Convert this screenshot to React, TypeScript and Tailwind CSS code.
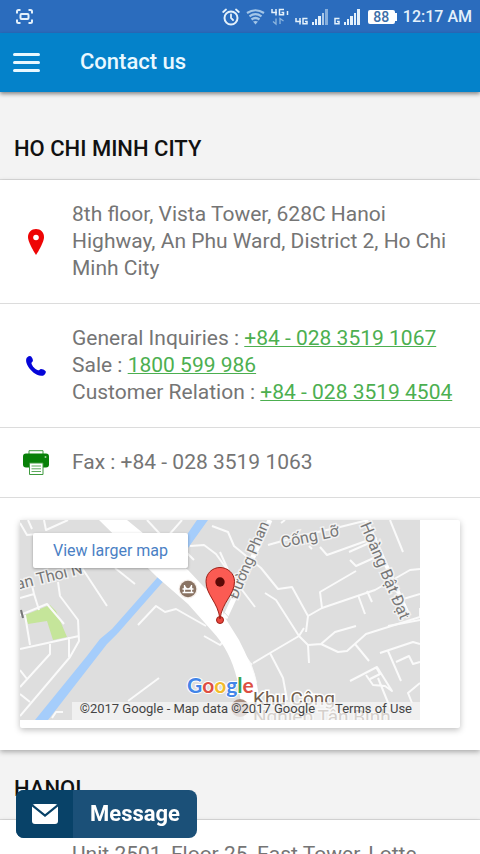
import React from "react";

interface Office {
  city: string;
  address: string;
  phones?: { label: string; number: string }[];
  fax?: string;
}

const offices: Office[] = [
  {
    city: "HO CHI MINH CITY",
    address:
      "8th floor, Vista Tower, 628C Hanoi Highway, An Phu Ward, District 2, Ho Chi Minh City",
    phones: [
      { label: "General Inquiries", number: "+84 - 028 3519 1067" },
      { label: "Sale", number: "1800 599 986" },
      { label: "Customer Relation", number: "+84 - 028 3519 4504" },
    ],
    fax: "+84 - 028 3519 1063",
  },
  {
    city: "HANOI",
    address: "Unit 2501, Floor 25, East Tower, Lotte Center Hanoi",
  },
];

function SignalBars({ dim }: { dim?: boolean }) {
  return (
    <svg width="16" height="16" viewBox="0 0 16 16" fill="#e4f1fb" aria-hidden="true">
      <rect x="0" y="13" width="2" height="3" />
      <rect x="3" y="10" width="2" height="6" />
      <rect x="6" y="7" width="3" height="9" />
      <rect x="10" y="4" width="2" height="12" opacity={dim ? 0.7 : 1} />
      <rect x="13" y="0" width="3" height="16" opacity={dim ? 0.5 : 1} />
    </svg>
  );
}

function StatusBar() {
  return (
    <div className="flex h-[33px] shrink-0 items-center bg-[#2b6cbd] pr-2 pl-4 text-[#e4f1fb]">
      <svg width="17" height="15" viewBox="0 0 17 15" fill="none" stroke="currentColor" strokeWidth="2" aria-hidden="true">
        <path d="M1 4.5V2.5Q1 1 2.5 1H4.5M12.500 1H14.500Q16 1 16 2.500V4.500M16 10.500V12.500Q16 14 14.500 14H12.500M4.500 14H2.500Q1 14 1 12.500V10.500" />
        <rect x="4.500" y="5" width="8" height="5" rx="1" />
      </svg>
      <div className="ml-auto flex items-center">
        <svg width="18" height="18" viewBox="0 0 18 18" fill="none" stroke="currentColor" strokeWidth="2" strokeLinecap="round" aria-hidden="true">
          <circle cx="9" cy="10" r="6.500" />
          <path d="M9 6.500V10L11 12M1.200 4L4 1.500M16.800 4L14 1.500" strokeWidth="1.800" />
        </svg>
        <svg className="ml-1.5" width="19" height="16" viewBox="0 0 19 16" fill="none" stroke="#a3c6e8" strokeWidth="2.200" aria-hidden="true">
          <path d="M1 4Q9.500 -1.500 18 4" />
          <path d="M3.500 7.300Q9.500 3 15.500 7.300" />
          <path d="M5.500 10.500Q9.500 7.500 13.500 10.500" />
          <path d="M7 12.500Q9.500 11.300 12 12.500L9.500 15.500Z" fill="#a3c6e8" stroke="none" />
        </svg>
        <svg className="ml-1.5" width="18" height="18" viewBox="0 0 18 18" fill="none" stroke="currentColor" strokeWidth="1.500" aria-hidden="true">
          <path d="M1 1V4.500H6M5 1V7.500M13 1.500H8.500V6.800H12.500V4.500H10.500M16.500 3V7" />
          <path d="M5 10.500V16L2 13.500M9 16V10.500L12.500 13" stroke="#8db6df" strokeWidth="1.300" />
        </svg>
        <svg className="mt-2 ml-1.5" width="13" height="8" viewBox="0 0 13 8" fill="none" stroke="currentColor" strokeWidth="1.500" aria-hidden="true">
          <path d="M1 1V4.500H6M5 1V7.500M12.500 1.500H8V6.800H12V4.500H10" />
        </svg>
        <div className="ml-1">
          <SignalBars dim />
        </div>
        <svg className="mt-2 ml-1.5" width="6" height="8" viewBox="0 0 6 8" fill="none" stroke="currentColor" strokeWidth="1.500" aria-hidden="true">
          <path d="M5.500 1.500H1V6.800H5V4.500H3" />
        </svg>
        <div className="ml-1">
          <SignalBars />
        </div>
        <div className="ml-2 flex items-center">
          <span className="flex h-3.5 w-[27px] items-center justify-center rounded-xs bg-white text-sm font-medium text-[#3d6fa8]">
            88
          </span>
          <span className="h-2 w-0.5 bg-white" />
        </div>
        <span className="ml-1.5 text-base font-medium">12:17 AM</span>
      </div>
    </div>
  );
}

function PinIcon() {
  return (
    <svg width="16" height="26" viewBox="0 0 16 26" aria-hidden="true">
      <path
        d="M8 0C3.400 0 0 3.500 0 8C0 14 8 26 8 26S16 14 16 8C16 3.500 12.600 0 8 0Z"
        fill="#ee0505"
      />
      <circle cx="8" cy="8.500" r="2.800" fill="#fff" />
    </svg>
  );
}

function PhoneIcon() {
  return (
    <svg width="20" height="20" viewBox="0 0 20 20" aria-hidden="true">
      <path
        d="M1.300 1.200C2.700 0 4.600 -.3 5.400 .8C6.300 2 7 3.600 6.900 4.800C6.800 6 5.200 6.200 5.500 7.500C6.200 10.300 9.300 13.400 12 14.300C13.300 14.700 13.700 13.100 15 13C16.500 13 18.400 13.800 19.500 14.900C20.300 15.900 19.500 17.800 18.200 18.900C16.800 20.200 13.800 20.100 11 18.800C6.500 16.600 2 11.800 .5 7C-.2 4.600 0 2.300 1.300 1.200Z"
        fill="#0505d8"
      />
    </svg>
  );
}

function PrinterIcon() {
  return (
    <svg width="26" height="25" viewBox="0 0 26 25" aria-hidden="true">
      <path d="M6 4V.7H20V4" fill="none" stroke="#3f9a3f" />
      <rect y="3.500" width="26" height="14" rx="3" fill="#078007" />
      <circle cx="22.500" cy="7" r="1" fill="#9fd49f" />
      <path d="M6.500 13H20V24.500H6.500Z" fill="#fff" stroke="#3f9a3f" />
      <path d="M8.500 16H18M8.500 18.800H18M8.500 21.500H18" stroke="#5dab5d" />
    </svg>
  );
}

function Row({ icon, children }: { icon: React.ReactNode; children: React.ReactNode }) {
  return (
    <div className="flex items-center border-b border-[#dcdcdc] py-[21px] pr-4">
      <div className="flex w-[72px] shrink-0 justify-center">{icon}</div>
      <div className="min-w-0 flex-1 text-[21px] leading-[27px] text-[#757575]">{children}</div>
    </div>
  );
}

function MapDrawing() {
  return (
    <svg className="block" width="400" height="200" viewBox="0 0 400 200" role="img" aria-label="Map">
      <rect width="400" height="200" fill="#dedede" />
      <path d="M5 95L30 85L36 91L47 117L33 120L27 101L8 104Z" fill="#c5e59a" />
      <path
        d="M177 0H188L148 56L98 113L87 124L28 200H15L67 136L80 119L92 109L137 58Z"
        fill="#a5cdfb"
      />
      {/* local streets */}
      <g fill="none" stroke="#fafafa" strokeWidth="2" strokeLinejoin="round">
        <path d="M0 3L7 15L18 14M8 0L12 9M24 0L26 10L48 0" />
        <path d="M0 78L14 74L12 65M14 74L19 90M0 95L27 84L44 104M5 95L10 125" />
        <path d="M38 62L40 76L58 100L59 121L50 137L0 196M0 129L59 116M49 117V137" />
        <path d="M30 124V134L0 167M0 150L7 159M0 174L10 182" />
        <path d="M32 198L36 192H43" />
        <path d="M62 48L87 86M95 48L115 64M118 105L136 86L145 92L156 89L186 106" />
        <path d="M108 181L139 158" />
        <path d="M127 0L140 14M162 0L148 16M164 30L174 40" />
        <path d="M170 26L184 25L196 34L216 62L235 87" />
        <path d="M192 6L208 12L214 26L241 48L258 69L272 67L288 96L286 112" />
        <path d="M200 32L218 72M288 96L302 88L355 70L390 50L400 49" />
        <path d="M302 88L300 72L336 51M338 75L345 94M347 71L352 82" />
        <path d="M245 73L256 80L279 116L288 125L289 143" />
        <path d="M230 145L250 133L279 116L284 108M250 133L263 158L267 180" />
        <path d="M288 125L301 124L318 132L327 131L346 114L400 97L400 88M301 124L315 112L336 106" />
        <path d="M335 124L349 141M368 106L400 100M380 80L400 74" />
        <path d="M330 161L357 147L372 171L365 166L353 165L346 155M356 147L360 154L350 159M358 158L371 190" />
        <path d="M360 133L393 122L400 124M368 131L381 161M376 142L389 136L393 144L400 142M400 163L388 173L392 183" />
        <path d="M248 25L280 16L320 7L348 0M261 3L265 0M289 26L292 29M300 27L307 35L346 21L357 18" />
        <path d="M329 32L356 20M330 40L336 46L356 37M370 0L383 32" />
        <path d="M184 116L200 125L207 118" />
        <path d="M208 111L230 143L237 163" />
      </g>
      {/* street carrying the Duong Phan label */}
      <path d="M250 0L205 98" stroke="#fff" strokeWidth="5" />
      <path
        d="M79 0H107L168 50L183 66Q202 84 204 96L219 120Q232 145 237 165L243 200H224L217 159Q210 130 192 111L168 84L137 57Z"
        fill="#fff"
      />
      <path d="M204 92Q229 117 238 165" fill="none" stroke="#dedede" />
      <path d="M346 0L388 94" stroke="#fff" strokeWidth="4" />
      <g
        fontFamily="Roboto, sans-serif"
        fontSize="16"
        fill="#777"
        stroke="#f2f2f2"
        strokeWidth="3"
        paintOrder="stroke"
      >
        <text x="-3" y="69" transform="rotate(-14 0 68)">an Thoi N</text>
        <text x="262" y="28" transform="rotate(-12 262 28)">Cống Lỡ</text>
        <text x="217" y="80" transform="rotate(-67 217 80)" fontSize="15">Đường Phan</text>
        <text x="340" y="5" transform="rotate(67 340 5)">Hoàng Bật Đạt</text>
      </g>
      <path d="M1 90L3 98" stroke="#777" strokeWidth="2" />
      <g>
        <circle cx="168" cy="69" r="9.500" fill="#f5eeea" />
        <circle cx="168" cy="69" r="8.300" fill="#8a7363" />
        <path d="M164.500 65V72M171.500 65V72M164.500 66Q168 72 171.500 66M162.500 72.500H173.500M162.500 69H173.500" fill="none" stroke="#fff" strokeWidth="1.300" />
        <circle cx="220" cy="188" r="9" fill="#a78d80" />
      </g>
      <g
        fontFamily="Roboto, sans-serif"
        fontSize="19"
        fill="#735f4f"
        stroke="#fff"
        strokeWidth="3"
        paintOrder="stroke"
      >
        <text x="233" y="185">Khu Công</text>
        <text x="233" y="203">Nghiệp Tân Bình</text>
      </g>
      <g stroke="#9c1f16">
        <circle cx="200" cy="100" r="3.500" fill="#e8453c" />
        <path
          d="M200 99C198 82 186 75 186 61.500C186 53.500 192.300 47.500 200 47.500S214.500 53.500 214.500 61.500C214.500 75 202 82 200 99Z"
          fill="#fb5b53"
        />
        <circle cx="200" cy="62" r="4.700" fill="#5c0906" stroke="none" />
      </g>
      <text
        x="167"
        y="173"
        fontFamily="Lato, sans-serif"
        fontSize="21"
        fontWeight="700"
        stroke="#fff"
        strokeWidth="2"
        paintOrder="stroke"
      >
        <tspan fill="#4285e8">G</tspan>
        <tspan fill="#dd4f43">o</tspan>
        <tspan fill="#f3bb2b">o</tspan>
        <tspan fill="#4285e8">g</tspan>
        <tspan fill="#35a455">l</tspan>
        <tspan fill="#dd4f43">e</tspan>
      </text>
    </svg>
  );
}

function MapCard() {
  return (
    <div className="px-5 pt-[22px] pb-[22px]">
      <div className="rounded-xs bg-white pb-2 shadow-[0_2px_6px_rgba(0,0,0,0.25)]">
        <div className="relative w-[400px] max-w-full overflow-hidden">
          <MapDrawing />
          <a
            href="#map"
            className="absolute top-[13px] left-[13px] rounded-xs bg-white px-5 py-[5px] text-base leading-[25px] text-[#4a80c4] shadow-[0_1px_3px_rgba(0,0,0,0.3)]"
          >
            View larger map
          </a>
          <div className="absolute right-0 bottom-0 flex gap-5 bg-[#f5f5f5]/75 px-2 pb-1 text-[13px] leading-[14px] whitespace-nowrap text-[#444]">
            <span>©2017 Google - Map data ©2017 Google</span>
            <a href="#terms">Terms of Use</a>
          </div>
        </div>
      </div>
    </div>
  );
}

function OfficeSection({ office }: { office: Office }) {
  return (
    <section>
      <h2 className="border-b border-[#dcdcdc] px-3.5 pt-[25px] pb-4 text-[22px] leading-7 font-medium text-[#111]">
        {office.city}
      </h2>
      <div className="bg-white shadow-[0_2px_5px_rgba(0,0,0,0.3)]">
        <Row icon={<PinIcon />}>{office.address}</Row>
        {office.phones && (
          <Row icon={<PhoneIcon />}>
            {office.phones.map((phone) => (
              <div key={phone.label} className="whitespace-nowrap">
                {phone.label} :{" "}
                <a
                  href={`tel:${phone.number.replace(/[^+\d]/g, "")}`}
                  className="text-[#4caf50] underline decoration-1"
                >
                  {phone.number}
                </a>
              </div>
            ))}
          </Row>
        )}
        {office.fax && <Row icon={<PrinterIcon />}>Fax : {office.fax}</Row>}
        {office.fax && <MapCard />}
      </div>
    </section>
  );
}

export default function App() {
  return (
    <div className="flex h-screen flex-col overflow-hidden bg-[#f3f3f3] font-['Roboto',sans-serif]">
      <StatusBar />
      <header className="relative z-10 flex h-[59px] shrink-0 items-center bg-[#0482ca] pb-0.5 pl-[13px] text-[#e9f8ff] shadow-[0_2px_4px_rgba(0,0,0,0.45)]">
        <button type="button" aria-label="Open menu" className="flex w-[27px] flex-col gap-[5px] pt-0.5">
          <span className="h-[3px] rounded-full bg-current" />
          <span className="h-[3px] rounded-full bg-current" />
          <span className="h-[3px] rounded-full bg-current" />
        </button>
        <h1 className="ml-10 text-[22px] font-medium">Contact us</h1>
      </header>

      <main className="min-h-0 flex-1 overflow-y-auto pt-[18px] [scrollbar-width:none]">
        {offices.map((office) => (
          <OfficeSection key={office.city} office={office} />
        ))}
      </main>

      <button
        type="button"
        className="fixed bottom-4 left-4 z-20 flex h-12 items-stretch overflow-hidden rounded-lg bg-[#1b5078] text-[22px] font-bold text-white"
      >
        <span className="flex w-[57px] items-center justify-center bg-[#084268]">
          <svg width="26" height="20" viewBox="0 0 26 20" aria-hidden="true">
            <rect width="26" height="20" rx="3" fill="#fff" />
            <path d="M0 1L13 11.500L26 1" fill="none" stroke="#084268" strokeWidth="2.200" />
          </svg>
        </span>
        <span className="flex items-center px-[17px] pb-0.5">Message</span>
      </button>
    </div>
  );
}
